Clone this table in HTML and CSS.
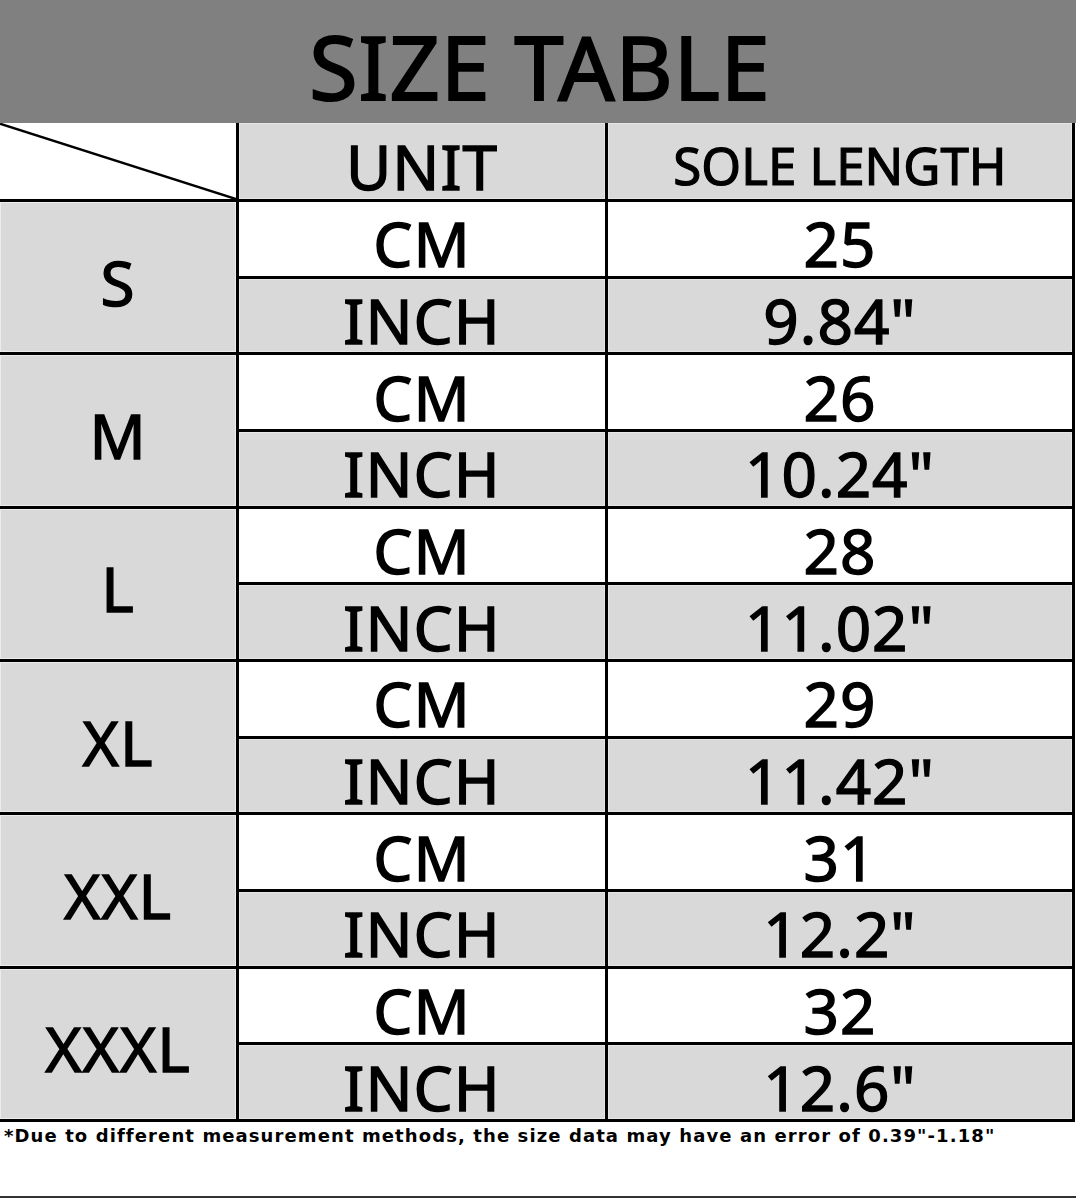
FILE: index.html
```html
<!DOCTYPE html>
<html>
<head>
<meta charset="utf-8">
<link rel="stylesheet" href="styles.css">
</head>
<body>
<div class="page">
  <div class="title">SIZE TABLE</div>
  <div class="grid">
    <div class="cell corner">
      <svg class="diag" viewBox="0 0 100 100" preserveAspectRatio="none"><line x1="0" y1="1" x2="100" y2="100" stroke="#000" stroke-width="2.5" vector-effect="non-scaling-stroke"/></svg>
    </div>
    <div class="cell head unit-h">UNIT</div>
    <div class="cell head sole-h">SOLE LENGTH</div>

    <div class="cell size">S</div>
    <div class="cell cm">CM</div>
    <div class="cell cm">25</div>
    <div class="cell inch">INCH</div>
    <div class="cell inch">9.84"</div>

    <div class="cell size">M</div>
    <div class="cell cm">CM</div>
    <div class="cell cm">26</div>
    <div class="cell inch">INCH</div>
    <div class="cell inch">10.24"</div>

    <div class="cell size">L</div>
    <div class="cell cm">CM</div>
    <div class="cell cm">28</div>
    <div class="cell inch">INCH</div>
    <div class="cell inch">11.02"</div>

    <div class="cell size">XL</div>
    <div class="cell cm">CM</div>
    <div class="cell cm">29</div>
    <div class="cell inch">INCH</div>
    <div class="cell inch">11.42"</div>

    <div class="cell size">XXL</div>
    <div class="cell cm">CM</div>
    <div class="cell cm">31</div>
    <div class="cell inch">INCH</div>
    <div class="cell inch">12.2"</div>

    <div class="cell size">XXXL</div>
    <div class="cell cm">CM</div>
    <div class="cell cm">32</div>
    <div class="cell inch">INCH</div>
    <div class="cell inch">12.6"</div>
  </div>
  <div class="note">*Due to different measurement methods, the size data may have an error of 0.39"-1.18"</div>
</div>
</body>
</html>
```

FILE: styles.css
```css
html, body {
  margin: 0;
  padding: 0;
  background: #fff;
}
.page {
  width: 1076px;
  height: 1200px;
  display: flex;
  flex-direction: column;
  font-family: "Noto Sans", "Open Sans", sans-serif;
  color: #000;
}
.title {
  height: 123px;
  background: #808080;
  display: flex;
  align-items: center;
  justify-content: center;
  font-size: 88px;
  font-weight: 400;
  -webkit-text-stroke: 2px #000;
  padding-top: 8px;
  box-sizing: border-box;
  padding-left: 4px;
  letter-spacing: 1px;
}
.grid {
  display: grid;
  grid-template-columns: 236px 366px 464px;
  grid-template-rows: 76px repeat(12, 73.67px);
  gap: 3px;
  background: #000;
  border-right: 3px solid #000;
  border-bottom: 3px solid #000;
  width: fit-content;
}
.cell {
  display: flex;
  align-items: center;
  justify-content: center;
  font-size: 62px;
  font-weight: 400;
  -webkit-text-stroke: 1.4px #000;
  letter-spacing: 1px;
  padding-top: 9px;
  box-sizing: border-box;
  line-height: 1;
}
.corner {
  background: #fff;
  position: relative;
  padding: 0;
}
.diag {
  position: absolute;
  left: 0;
  top: 0;
  width: 100%;
  height: 100%;
}
.head {
  background: #d9d9d9;
  box-shadow: inset 0 0 0 1px #e6e6e6;
}
.sole-h {
  font-size: 51px;
  -webkit-text-stroke: 1.2px #000;
  letter-spacing: 0px;
}
.size {
  grid-row: span 2;
  background: #d9d9d9;
  box-shadow: inset 0 0 0 1px #ececec;
}
.cm {
  background: #fff;
}
.inch {
  background: #d9d9d9;
  box-shadow: inset 0 0 0 1px #e6e6e6;
}
.note {
  flex: 1;
  border-bottom: 2px solid #333;
  font-family: "DejaVu Sans", sans-serif;
  font-weight: bold;
  font-size: 18px;
  letter-spacing: 1.1px;
  padding: 3px 0 0 4px;
  box-sizing: border-box;
  max-height: 76px;
  white-space: nowrap;
}
```
